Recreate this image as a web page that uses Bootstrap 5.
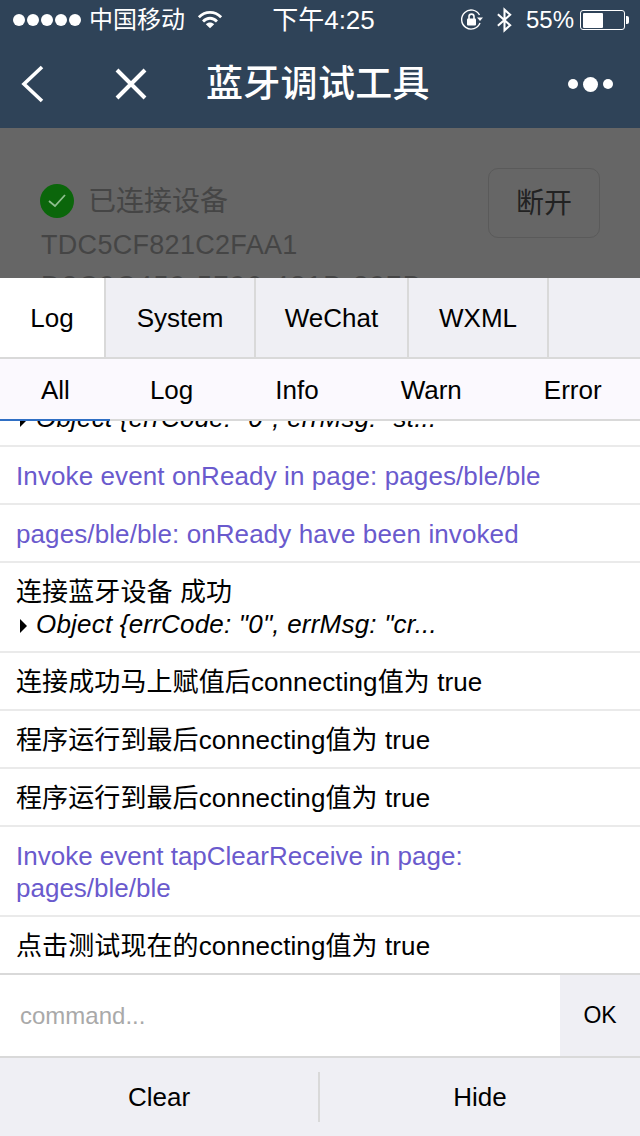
<!DOCTYPE html>
<html lang="zh">
<head>
<meta charset="utf-8">
<title>蓝牙调试工具</title>
<link rel="stylesheet" href="https://cdn.jsdelivr.net/npm/bootstrap@5.3.0/dist/css/bootstrap.min.css">
<style>
html,body{margin:0;background:#fff}
body{width:640px;height:1136px;overflow:hidden;font-family:"Liberation Sans","Noto Sans CJK SC",sans-serif;color:#000}
.shell{width:640px;height:1136px}
.statusbar{height:40px;background:#2f4358;color:#fff;font-size:24px;padding:0 0 0 13px}
.statusbar .lft,.statusbar .rgt{flex:1 1 0}
.dots{gap:2px}
.dots i{width:12px;height:12px;border-radius:50%;background:#fff;display:block}
.carrier{margin-left:8px}
.wifi{margin-left:12px}
.clock{font-size:26px;width:110px;white-space:nowrap;margin-right:6px;text-align:center}
.btooth{margin-left:12px}
.pct{margin-left:13px}
.batt{width:45px;height:20px;border:1.5px solid #fff;border-radius:3px;padding:1.5px;margin-left:6px}
.batt b{display:block;height:100%;width:52%;background:#fff;border-radius:1px}
.battcap{width:3px;height:8px;background:#fff;margin:0 11px 0 1px;border-radius:0 2px 2px 0}
.navrow{height:88px;background:#2f4358;color:#fff;padding-left:20px;padding-right:27px}
.navrow h1{font-size:37px;font-weight:500;margin:0 0 0 59px;line-height:1;letter-spacing:.3px}
.navclose{margin-left:69px}
.more{gap:5px}
.more i{display:block;background:#fff;border-radius:50%;width:10px;height:10px}
.more i.big{width:15px;height:15px}
.dimpage{height:150px;background:#666;overflow:hidden;padding:40px 40px 0 41px;color:#454545}
.okicon{width:34px;height:34px;border-radius:50%;background:#0b660b;margin:-3px 14px 0 -1px;flex:none}
.devname{line-height:34px;height:34px;font-size:28px;margin-bottom:5px}
.devid{line-height:42px;font-size:27px;white-space:nowrap;letter-spacing:.3px}
.devid.uuid{letter-spacing:1.5px;margin-top:-1px}
.discon{width:112px;height:70px;border:1px solid #5a5a5a;border-radius:10px;color:#222;font-size:28px;background:#666;flex:none;padding-top:1px}
.devtext{padding-top:17px;min-width:0}
.tabs{height:81px;background:#efeff4;border-bottom:2px solid #d9d9d9}
.tabbtn{height:79px;width:150px;border-right:2px solid #d9d9d9;font-size:26px;flex:none;padding-top:2px}
.tabbtn.on{width:106px;background:#fff}
.tabbtn.w2{width:153px}
.tabbtn.w3{width:140px}
.filters{height:62px;background:#fbf9fe;border-bottom:2px solid #d9d9d9;font-size:26px;position:relative;padding-left:41px}
.filters span{flex:none;line-height:60px;padding-top:1px}
.filters span+span{margin-left:82px}
.filters span:nth-child(2){margin-left:80px}
.loadbar{position:absolute;left:0;bottom:-2px;width:110px;height:2px;background:#2f6fc4}
.logs{height:554px;overflow:hidden;justify-content:flex-end;background:#fff}
.logitem{padding:13px 16px 11px;border-bottom:2px solid #eaeaea;font-size:26px;line-height:32px;flex:none;letter-spacing:.1px}
.logitem:last-child{border-bottom-color:#d9d9d9}
.logitem.plain{letter-spacing:0}
.sys{color:#6a5acd}
.obj{font-style:italic;white-space:nowrap;letter-spacing:.2px}
.arrow{display:inline-block;width:0;height:0;border-left:7px solid #000;border-top:7px solid transparent;border-bottom:7px solid transparent;margin:0 9px 0 4px}
.cmd{height:81px;background:#fff}
.cmdinp{flex:1;padding-left:20px;border:0;outline:0;font-size:24px;font-family:inherit;background:transparent;min-width:0}
.cmdinp::placeholder{color:#a9a9a9;opacity:1}
.okbtn{width:80px;height:81px;background:#efeff4;font-size:23px}
.bottombar{height:80px;background:#efeff4;border-top:2px solid #d9d9d9;font-size:26px;padding-top:14px;padding-bottom:14px}
.bottombar div{flex:1 1 0;text-align:center;line-height:50px}
.bottombar div:first-child{border-right:2px solid #d9d9d9;flex:0 0 320px}
</style>
</head>
<body>
<div class="shell d-flex flex-column">
  <div class="statusbar d-flex align-items-center">
    <div class="lft d-flex align-items-center">
      <div class="dots d-flex"><i></i><i></i><i></i><i></i><i></i></div>
      <span class="carrier">中国移动</span>
      <svg class="wifi" width="26" height="22" viewBox="0 0 28 22" fill="none" stroke="#fff" stroke-width="3"><path d="M2 8C9 1 19 1 26 8"/><path d="M6.5 12.5C11 8 17 8 21.5 12.5"/><path d="M14 20L9.5 15.5C12 13 16 13 18.5 15.5Z" fill="#fff" stroke="none"/></svg>
    </div>
    <div class="clock">下午4:25</div>
    <div class="rgt d-flex align-items-center justify-content-end">
      <svg width="24" height="24" viewBox="0 0 24 24" fill="none" stroke="#fff" stroke-width="1.4"><path d="M19.5 7A9.5 9.5 0 1 0 20 15"/><path d="M17 9.5h6l-3 3.5z" fill="#fff" stroke="none"/><rect x="7" y="10.5" width="9" height="7" rx="1" fill="#fff" stroke="none"/><path d="M9 11V8.6a2.5 2.5 0 0 1 5 0V11" stroke-width="1.6"/></svg>
      <svg class="btooth" width="17" height="26" viewBox="0 0 18 26" fill="none" stroke="#fff" stroke-width="2.2"><path d="M2 7L15 18.5L9 24V2L15 7.5L2 19"/></svg>
      <span class="pct">55%</span>
      <div class="batt"><b></b></div><div class="battcap"></div>
    </div>
  </div>
  <div class="navrow d-flex align-items-center">
    <svg width="26" height="38" viewBox="0 0 26 38" fill="none" stroke="#fff" stroke-width="3.6"><path d="M22 2L4 19L22 36"/></svg>
    <svg class="navclose" width="32" height="32" viewBox="0 0 32 32" fill="none" stroke="#fff" stroke-width="4"><path d="M2 2L30 30M30 2L2 30"/></svg>
    <h1>蓝牙调试工具</h1>
    <div class="more d-flex align-items-center ms-auto"><i></i><i class="big"></i><i></i></div>
  </div>
  <div class="dimpage">
    <div class="d-flex justify-content-between align-items-start">
      <div class="devtext">
        <div class="d-flex align-items-center devname">
          <span class="okicon d-flex align-items-center justify-content-center">
            <svg width="20" height="16" viewBox="0 0 20 16" fill="none" stroke="#8fbf8f" stroke-width="1.8"><path d="M2 8L8 13L18 2"/></svg>
          </span>已连接设备
        </div>
        <div class="devid">TDC5CF821C2FAA1</div>
        <div class="devid uuid">D2C9C459-5796-481B-897B</div>
      </div>
      <div class="discon d-flex align-items-center justify-content-center">断开</div>
    </div>
  </div>
  <div class="tabs d-flex">
    <div class="tabbtn on d-flex align-items-center justify-content-center">Log</div>
    <div class="tabbtn d-flex align-items-center justify-content-center">System</div>
    <div class="tabbtn w2 d-flex align-items-center justify-content-center">WeChat</div>
    <div class="tabbtn w3 d-flex align-items-center justify-content-center">WXML</div>
  </div>
  <div class="filters d-flex">
    <span>All</span><span>Log</span><span>Info</span><span>Warn</span><span>Error</span>
    <div class="loadbar"></div>
  </div>
  <div class="logs d-flex flex-column">
    <div class="logitem"><div class="obj"><i class="arrow"></i>Object {errCode: "0", errMsg: "st...</div></div>
    <div class="logitem sys">Invoke event onReady in page: pages/ble/ble</div>
    <div class="logitem sys">pages/ble/ble: onReady have been invoked</div>
    <div class="logitem">连接蓝牙设备 成功<div class="obj"><i class="arrow"></i>Object {errCode: "0", errMsg: "cr...</div></div>
    <div class="logitem">连接成功马上赋值后connecting值为 true</div>
    <div class="logitem">程序运行到最后connecting值为 true</div>
    <div class="logitem">程序运行到最后connecting值为 true</div>
    <div class="logitem sys plain">Invoke event tapClearReceive in page:<br>pages/ble/ble</div>
    <div class="logitem">点击测试现在的connecting值为 true</div>
  </div>
  <div class="cmd d-flex align-items-center">
    <input class="cmdinp" type="text" placeholder="command...">
    <div class="okbtn d-flex align-items-center justify-content-center">OK</div>
  </div>
  <div class="bottombar d-flex">
    <div>Clear</div><div>Hide</div>
  </div>
</div>
<script src="https://cdn.jsdelivr.net/npm/bootstrap@5.3.0/dist/js/bootstrap.bundle.min.js"></script>
</body>
</html>
